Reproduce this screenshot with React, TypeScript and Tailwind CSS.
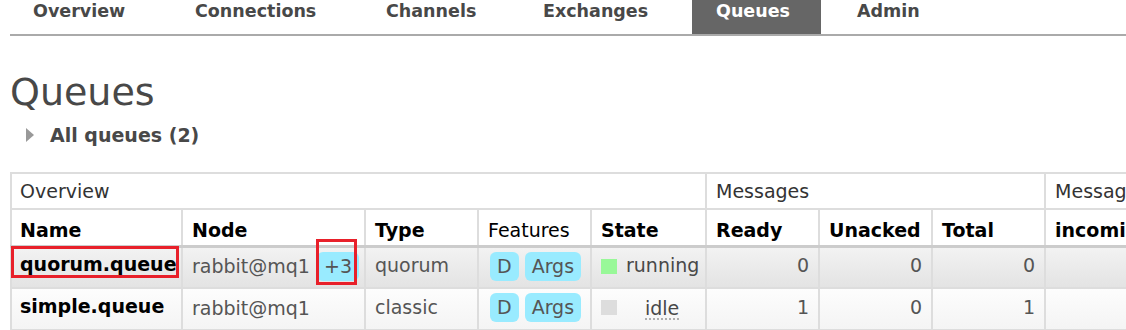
const tabs = [
  { label: "Overview", w: "w-[162px]", pl: "pl-[23px]" },
  { label: "Connections", w: "w-[191px]", pl: "pl-[23px]" },
  { label: "Channels", w: "w-[157px]", pl: "pl-[23px]" },
  { label: "Exchanges", w: "w-[172px]", pl: "pl-[23px]" },
  { label: "Queues", w: "w-[129px]", pl: "pl-[24px]", active: true },
  { label: "Admin", w: "w-[120px]", pl: "pl-[36px]" },
];

const widths = [171, 183, 113, 113, 115, 113, 113, 113, 200];

const Badge = ({ children }: { children: React.ReactNode }) => (
  <span className="inline-block h-[29px] rounded-[6px] bg-[#99ebff] px-[7px] leading-[29px] text-[#555]">
    {children}
  </span>
);

const cell = "border-2 border-[#ddd] px-[9px] align-top";

export default function App() {
  const rows = [
    {
      name: "quorum.queue",
      type: "quorum",
      state: "running",
      ready: 0,
      unacked: 0,
      total: 0,
      bg: "bg-linear-to-b from-[#f3f3f3] to-[#e3e3e3]",
    },
    {
      name: "simple.queue",
      type: "classic",
      state: "idle",
      ready: 1,
      unacked: 0,
      total: 1,
      bg: "bg-linear-to-b from-[#fdfdfd] to-[#f4f4f4]",
    },
  ];

  return (
    <div className="h-[330px] w-[1126px] overflow-hidden bg-white pl-[10px] font-['DejaVu_Sans',Verdana,sans-serif]">
      <ul className="flex h-[36px] border-b-2 border-[#aaa]">
        {tabs.map((t) => (
          <li
            key={t.label}
            className={`${t.w} ${t.pl} shrink-0 text-[17.5px] font-bold leading-[22px] ${
              t.active ? "bg-[#666] text-white" : "text-[#484848]"
            }`}
          >
            {t.label}
          </li>
        ))}
      </ul>

      <h1 className="mt-[34px] text-[38px] font-normal leading-[44px] text-[#484848]">
        Queues
      </h1>

      <div className="mt-[9px] flex h-[24px] items-center pl-[16px]">
        <svg width="8" height="14" viewBox="0 0 8 14">
          <polygon points="0,0 8,7 0,14" fill="#999" />
        </svg>
        <span className="ml-[16px] text-[19px] font-bold text-[#484848]">
          All queues (2)
        </span>
      </div>

      <table className="mt-[25px] table-fixed border-collapse text-[19px] leading-[24px]" style={{ width: 1234 }}>
        <colgroup>
          {widths.map((w, i) => (
            <col key={i} style={{ width: w }} />
          ))}
        </colgroup>
        <thead>
          <tr className="h-[36px] border-t-2 border-[#ccc] text-[#333]">
            <td colSpan={5} className="border-2 border-[#ddd] pl-[8px] pr-[9px] align-middle">
              Overview
            </td>
            <td colSpan={3} className="border-2 border-[#ddd] px-[9px] align-middle">
              Messages
            </td>
            <td className="border-2 border-[#ddd] px-[9px] align-middle whitespace-nowrap">
              Message rates
            </td>
          </tr>
          <tr className="h-[37px] border-b-[3px] border-[#ccc] text-black">
            {["Name", "Node", "Type", "Features", "State", "Ready", "Unacked", "Total", "incoming"].map(
              (h, i) => (
                <th
                  key={h}
                  className={`border-2 border-b-[3px] border-[#ddd] border-b-[#ccc] pr-[9px] pt-[8px] text-left align-top whitespace-nowrap ${
                    i === 0 ? "pl-[8px]" : "pl-[9px]"
                  } ${h === "Features" ? "font-normal" : "font-bold"}`}
                >
                  {h}
                </th>
              )
            )}
          </tr>
        </thead>
        <tbody>
          {rows.map((r, i) => (
            <tr key={r.name} className={`h-[42px] ${r.bg} text-[#555]`}>
              <td className={`${cell} relative pl-[8px] pt-[4px]`}>
                <div className="flex h-[29px] -translate-y-[2px] items-center font-bold text-black whitespace-nowrap">
                  {r.name}
                </div>
                {i === 0 && (
                  <div className="absolute -left-[1px] -top-[2px] h-[32px] w-[168px] border-[3px] border-[#e8202a]" />
                )}
              </td>
              <td className={`${cell} pt-[4px]`}>
                <div className="flex h-[29px] items-center whitespace-nowrap">
                  rabbit@mq1
                  {i === 0 && (
                    <span className="relative ml-[7px]">
                      <Badge>+3</Badge>
                      <span className="absolute -left-[1px] -top-[13px] h-[46px] w-[41px] border-[3px] border-[#e8202a]" />
                    </span>
                  )}
                </div>
              </td>
              <td className={`${cell} pt-[4px]`}>
                <div className="flex h-[29px] -translate-y-[1px] items-center">{r.type}</div>
              </td>
              <td className={`${cell} pt-[4px]`}>
                <div className="flex h-[29px] items-center gap-[6px] pl-[2px]">
                  <Badge>D</Badge>
                  <Badge>Args</Badge>
                </div>
              </td>
              <td className={`${cell} pt-[4px]`}>
                <div className="flex h-[29px] items-center">
                  <span
                    className={`h-[15px] w-[16px] shrink-0 ${
                      r.state === "running" ? "bg-[#98f898]" : "bg-[#ddd]"
                    }`}
                  />
                  {r.state === "running" ? (
                    <span className="ml-[9px] -translate-y-[1px] text-[#484848]">running</span>
                  ) : (
                    <span className="ml-[28px] text-[#484848] underline decoration-dotted decoration-[#aaa] underline-offset-[4px]">
                      idle
                    </span>
                  )}
                </div>
              </td>
              {[r.ready, r.unacked, r.total].map((n, k) => (
                <td key={k} className={`${cell} pt-[4px] text-right`}>
                  <div className="flex h-[29px] -translate-y-[1px] items-center justify-end">{n}</div>
                </td>
              ))}
              <td className={cell} />
            </tr>
          ))}
        </tbody>
      </table>
    </div>
  );
}
